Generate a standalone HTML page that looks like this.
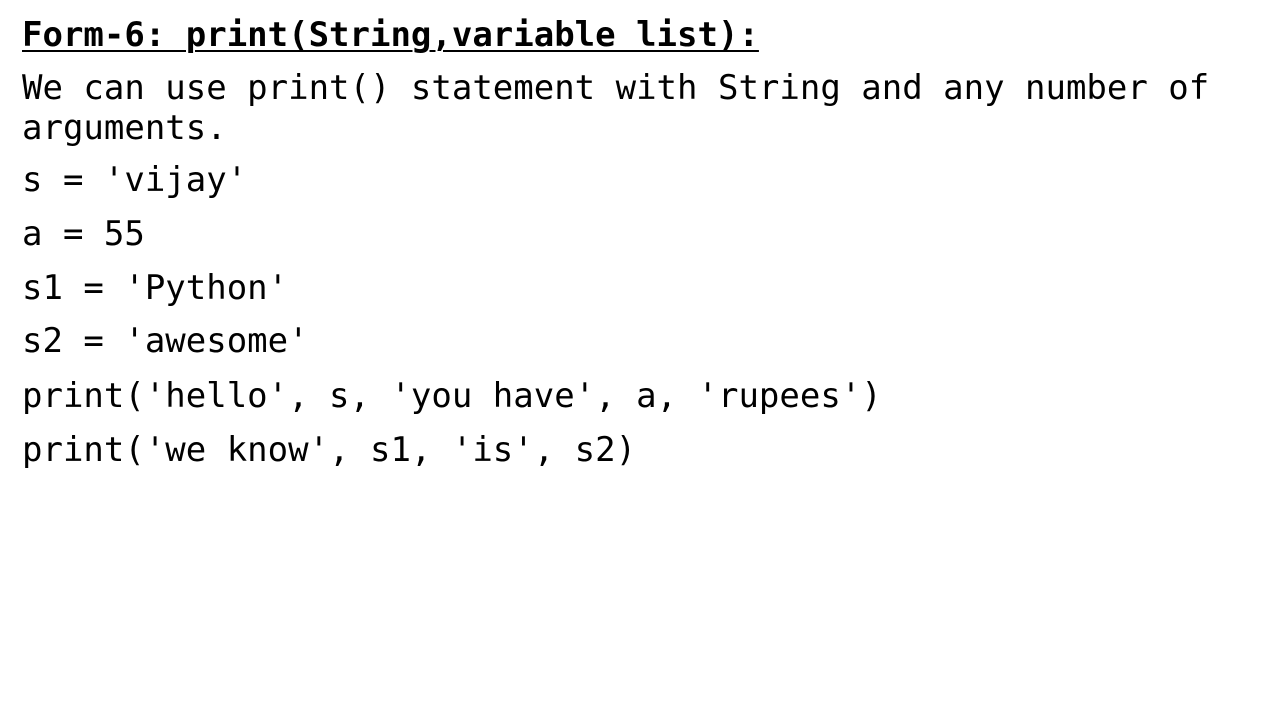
<!DOCTYPE html>
<html><head><meta charset="utf-8"><style>
body{margin:0;width:1280px;height:720px;background:#fff;overflow:hidden;position:relative}
div{position:absolute;left:22px;font-family:"DejaVu Sans Mono","Liberation Mono",monospace;font-size:34px;line-height:40px;color:#000;white-space:pre}
.t{font-weight:bold;text-decoration:underline;text-decoration-thickness:2px;text-underline-offset:4px}
</style></head><body>
<div class="t" style="top:15px">Form-6: print(String,variable list):</div>
<div style="top:68px">We can use print() statement with String and any number of</div>
<div style="top:108px">arguments.</div>
<div style="top:160px">s = 'vijay'</div>
<div style="top:214px">a = 55</div>
<div style="top:268px">s1 = 'Python'</div>
<div style="top:321px">s2 = 'awesome'</div>
<div style="top:376px">print('hello', s, 'you have', a, 'rupees')</div>
<div style="top:430px">print('we know', s1, 'is', s2)</div>
</body></html>
